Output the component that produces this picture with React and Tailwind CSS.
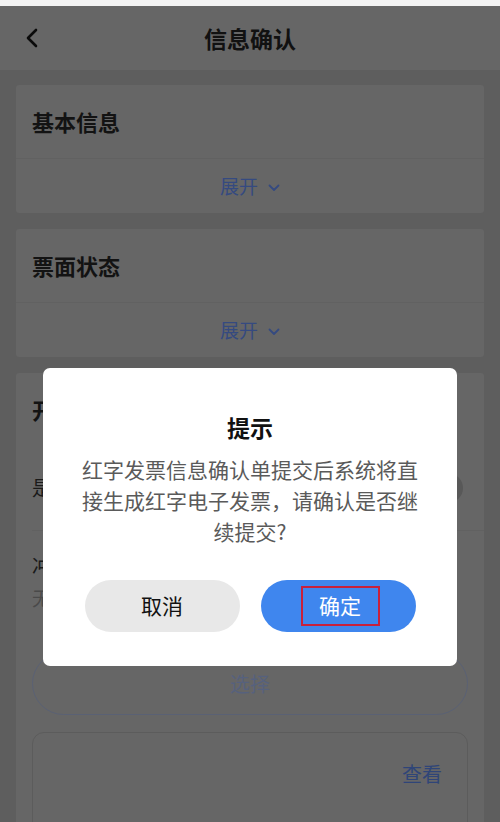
import React from "react";

const font = { fontFamily: '"Noto Sans CJK SC", "Noto Sans", sans-serif' };

const ExpandRow = () => (
    <div className="h-[55px] flex items-center justify-center gap-[10px] border-t border-[#616161]">
        <span className="text-[19px] text-[#354a80]">展开</span>
        <svg width="12" height="8" viewBox="0 0 12 8" className="mt-[3px]">
            <polyline points="1.5,1.5 6,6 10.5,1.5" fill="none" stroke="#354a80" strokeWidth="1.8" strokeLinecap="round" strokeLinejoin="round" />
        </svg>
    </div>
);

const App = () => {
    return (
        <div style={font} className="relative w-[500px] h-[822px] overflow-hidden bg-[#5e5e5e]">
            <div className="h-[6px] bg-[#f3f3f3]" />

            {/* 头部 */}
            <header className="h-[64px] bg-[#666666] flex items-center">
                <div className="w-[70px] pl-[25px]">
                    <svg width="14" height="20" viewBox="0 0 14 20">
                        <polyline points="11,2 3,10 11,18" fill="none" stroke="#0a0a0a" strokeWidth="2.6" strokeLinecap="round" strokeLinejoin="round" />
                    </svg>
                </div>
                <h1 className="flex-1 text-center text-[23px] font-bold text-[#111]">信息确认</h1>
                <div className="w-[70px]" />
            </header>

            <main className="px-4 pt-[15px] flex flex-col gap-4">
                {/* 基本信息 */}
                <section className="bg-[#666666] rounded-[3px]">
                    <div className="h-[73px] flex items-center pl-4 text-[22px] font-bold text-[#131313]">基本信息</div>
                    <ExpandRow />
                </section>

                {/* 票面状态 */}
                <section className="bg-[#666666] rounded-[3px]">
                    <div className="h-[73px] flex items-center pl-4 text-[22px] font-bold text-[#131313]">票面状态</div>
                    <ExpandRow />
                </section>

                {/* 开具原因 */}
                <section className="bg-[#666666] rounded-[3px] pb-10">
                    <div className="h-[73px] flex items-center pl-4 text-[22px] font-bold text-[#131313]">开具红字发票原因</div>
                    <div className="ml-4 h-[85px] flex items-center justify-between pr-[21px] border-b border-[#616161]">
                        <span className="text-[20px] text-[#1a1a1a]">是否</span>
                        <div className="w-[52px] h-[30px] rounded-full bg-[#585858]" />
                    </div>
                    <div className="px-4 pt-[22px]">
                        <div className="text-[20px] leading-[26px] text-[#1a1a1a]">冲红原因</div>
                        <div className="mt-[6px] text-[19px] leading-[26px] text-[#4a4a4a]">无</div>
                        <button className="mt-[41px] w-full h-[63px] rounded-full border border-[#5a6174] text-[20px] text-[#56617d]">选择</button>
                        <div className="mt-[17px] h-[140px] rounded-[12px] border border-[#5c5c5c] pt-[28px] pr-[25px] flex justify-end items-start">
                            <span className="text-[20px] leading-[26px] text-[#2f4578]">查看</span>
                        </div>
                    </div>
                </section>
            </main>

            {/* 提示弹窗 */}
            <div className="absolute left-[43px] top-[368px] w-[414px] h-[298px] bg-white rounded-[7px] flex flex-col items-center pt-[44px]">
                <h2 className="text-[23px] leading-[30px] font-bold text-[#111]">提示</h2>
                <p className="mt-[12px] w-[342px] text-center text-[21px] leading-[31px] text-[#5a5a5a]">
                    红字发票信息确认单提交后系统将直接生成红字电子发票，请确认是否继续提交?
                </p>
                <div className="mt-[33px] flex gap-[21px]">
                    <button className="w-[155px] h-[52px] rounded-full bg-[#e8e8e8] text-[21px] text-[#111]">取消</button>
                    <button className="w-[155px] h-[52px] rounded-full bg-[#3f86ee] text-[21px] text-white flex items-center justify-center">
                        <span className="ml-[4px] w-[79px] h-[40px] border-2 border-[#c8203c] flex items-center justify-center">确定</span>
                    </button>
                </div>
            </div>
        </div>
    );
};

export default App;
